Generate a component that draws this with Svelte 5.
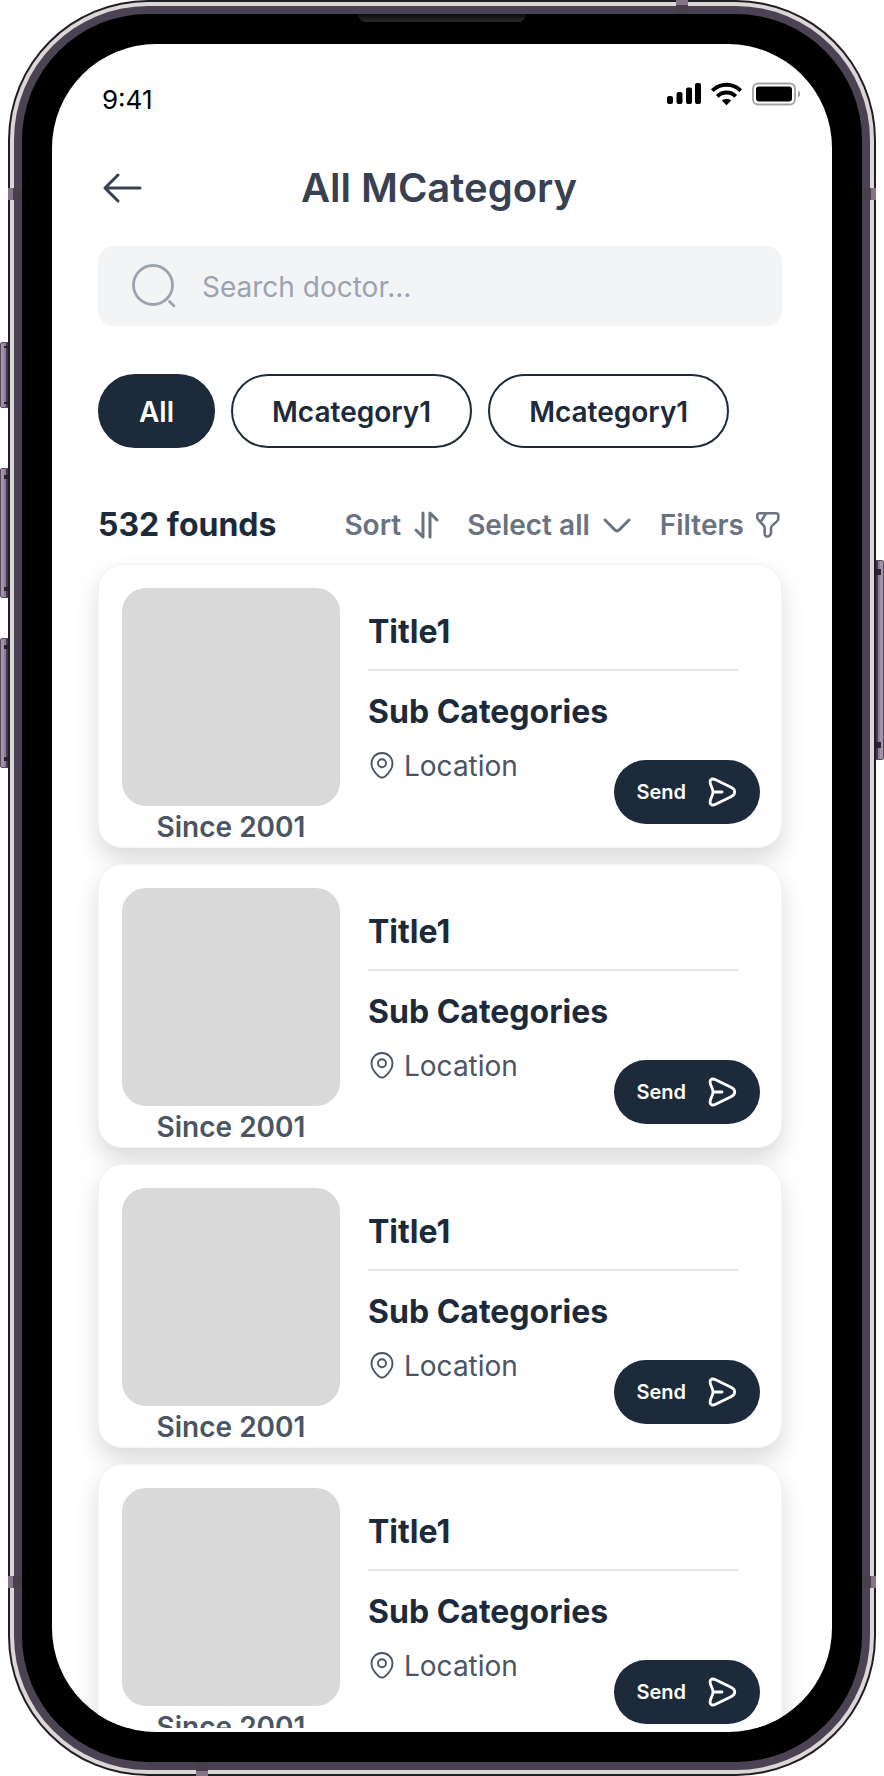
<script>
  const chips = ['All', 'Mcategory1', 'Mcategory1'];
  let active = $state(0);
  let query = $state('');
  const cards = Array.from({ length: 4 }, (_, id) => ({
    id,
    title: 'Title1',
    sub: 'Sub Categories',
    location: 'Location',
    since: 'Since 2001'
  }));
</script>

<div class="device">
  <span class="key silent"></span>
  <span class="key volume-up"></span>
  <span class="key volume-down"></span>
  <span class="key power"></span>

  <div class="shell">
    <div class="rim">
      <div class="band">
        <div class="bezel">
          <main class="screen">
            <div class="status">
              <span class="time">9:41</span>
              <svg width="134" height="28" viewBox="0 0 134 28" aria-hidden="true">
                <rect x="1" y="16" width="6" height="8" rx="2" />
                <rect x="10.500" y="12" width="6" height="12" rx="2" />
                <rect x="20" y="7.500" width="6" height="16.500" rx="2" />
                <rect x="29" y="3" width="6" height="21" rx="2" />
                <g fill="none" stroke="#000" stroke-width="4">
                  <path d="M46.300 10.700a20 20 0 0 1 28.400 0" />
                  <path d="M51.300 16.300a13 13 0 0 1 18.400 0" />
                </g>
                <path d="M55.800 20.500a7.200 7.200 0 0 1 9.400 0l-4.700 4.700z" />
                <rect x="87" y="3.500" width="42" height="21" rx="5" fill="none" stroke="#a3a3a3" stroke-width="1.800" />
                <rect x="90" y="6.500" width="36" height="15" rx="3" />
                <path d="M132 10.500q2.400 1.500 2.400 3.500t-2.400 3.500z" fill="#a3a3a3" />
              </svg>
            </div>

            <header class="head">
              <button class="plain back" aria-label="Back">
                <svg width="40" height="32" viewBox="0 0 40 32" class="line">
                  <path d="M16 3 3 16l13 13M3 16h35" stroke-width="3" />
                </svg>
              </button>
              <h1>All MCategory</h1>
            </header>

            <label class="search">
              <svg width="48" height="48" viewBox="0 0 48 48" class="line">
                <circle cx="23" cy="23" r="19.500" stroke-width="2.800" />
                <path d="m39.500 39.500 4.500 4.500" stroke-width="2.800" />
              </svg>
              <input type="text" placeholder="Search doctor..." aria-label="Search doctor" bind:value={query} />
            </label>

            <nav class="chips">
              {#each chips as chip, i}
                <button class="chip" class:active={active === i} onclick={() => (active = i)}>{chip}</button>
              {/each}
            </nav>

            <div class="tools">
              <strong>532 founds</strong>
              <div class="actions">
                <button class="plain tool">
                  Sort
                  <svg width="28" height="28" viewBox="0 0 28 28" class="line" stroke-width="3">
                    <path d="M11 2v24l-7-7M18 26V2l7 7" />
                  </svg>
                </button>
                <button class="plain tool">
                  Select all
                  <svg width="32" height="28" viewBox="0 0 32 28" class="line" stroke-width="3">
                    <path d="m4 9 9.700 9.700q2.300 2.300 4.600 0L28 9" />
                  </svg>
                </button>
                <button class="plain tool">
                  Filters
                  <svg width="26" height="28" viewBox="0 0 26 28" class="line" stroke-width="2.600">
                    <path d="M4.500 2.300h16.500q2.300 0 2.300 2.300v2.700c0 1.200-.6 2.300-1.400 3.100l-4.600 4.200c-.9.800-1.300 1.700-1.300 2.700v4.800c0 1.200-.8 2.200-1.700 2.700l-.7.400c-1.700.9-3.900-.2-3.900-2.200v-5.800c0-.9-.5-2.100-1.100-2.800l-4.800-5.100C3 8.500 2.300 7.200 2.300 6.300V4.600q0-2.300 2.200-2.300zM11 2.500 5.600 11" />
                  </svg>
                </button>
              </div>
            </div>

            <section class="list">
              {#each cards as card (card.id)}
                <article class="card">
                  <div class="media">
                    <div class="thumb"></div>
                    <span class="since">{card.since}</span>
                  </div>
                  <div class="info">
                    <h2 class="title">{card.title}</h2>
                    <h3>{card.sub}</h3>
                    <div class="foot">
                      <span class="place">
                        <svg width="28" height="28" viewBox="0 0 28 28" class="line" stroke-width="1.900">
                          <path d="M14 1c6.300 0 10.500 4.800 10.500 10.500 0 4.800-3.600 9.600-7.500 12.900q-3 2.400-6 0c-3.900-3.300-7.500-8.100-7.500-12.900C3.500 5.800 7.700 1 14 1z" />
                          <circle cx="14" cy="11.200" r="4" />
                        </svg>
                        {card.location}
                      </span>
                      <button class="send">
                        Send
                        <svg width="32" height="32" viewBox="0 0 32 32" class="line" stroke-width="2.800">
                          <path d="M9.600 3.700 25 11.300c5 2.400 5 7 0 9.400L9.600 28.300c-4.400 2-6.600-.6-5-4.800l1.900-4.700c.7-1.800.7-3.800 0-5.600L4.600 8.500c-1.600-4.200.6-6.800 5-4.800zM8 16h8" />
                        </svg>
                      </button>
                    </div>
                  </div>
                </article>
              {/each}
            </section>
          </main>
        </div>
      </div>
    </div>
    <span class="seam top"></span>
    <span class="seam bottom"></span>
    <span class="seam left upper"></span>
    <span class="seam left lower"></span>
    <span class="seam right upper"></span>
    <span class="seam right lower"></span>
    <span class="speaker"></span>
  </div>
</div>

<style>
  :global(body) {
    background: #fff;
  }
  .device,
  .device * {
    box-sizing: border-box;
  }
  .device {
    position: relative;
    height: 100vh;
    padding: 0 8px;
    font-family: Inter, sans-serif;
    font-size: 28px;
    line-height: 40px;
    color: #1c2a3a;
  }

  /* Hardware */
  .shell {
    position: relative;
    height: 100%;
    padding: 2px;
    border-radius: 140px;
    background: #231c23;
  }
  .rim {
    height: 100%;
    padding: 4px;
    border-radius: 138px;
    background: #dbd7d9;
  }
  .band {
    height: 100%;
    padding: 8px;
    border-radius: 134px;
    background: #4b4354;
  }
  .bezel {
    height: 100%;
    padding: 30px;
    border-radius: 126px;
    background: #000;
  }
  .key {
    position: absolute;
    left: 0;
    width: 9px;
    border: 1px solid #5a4c60;
    border-radius: 2px 0 0 2px;
    background: linear-gradient(to right, #a392a8 3px, #8b7d99 3px 5px, #44394a 5px);
  }
  .key::before,
  .key::after {
    content: '';
    position: absolute;
    left: 3px;
    width: 5px;
    height: 4px;
    background: #2b2230;
  }
  .key::before {
    top: 6px;
  }
  .key::after {
    bottom: 6px;
  }
  .silent {
    top: 342px;
    height: 66px;
  }
  .silent::before,
  .silent::after {
    height: 2px;
  }
  .silent::before {
    top: 3px;
  }
  .silent::after {
    bottom: 3px;
  }
  .volume-up {
    top: 468px;
    height: 130px;
  }
  .volume-down {
    top: 638px;
    height: 130px;
  }
  .power {
    left: auto;
    right: 0;
    top: 560px;
    height: 200px;
    border-radius: 0 2px 2px 0;
    background: linear-gradient(to left, #a392a8 3px, #8b7d99 3px 5px, #44394a 5px);
  }
  .power::before,
  .power::after {
    left: 0;
    height: 6px;
  }
  .power::before {
    top: 8px;
  }
  .power::after {
    bottom: 11px;
  }
  .seam {
    position: absolute;
  }
  .top,
  .bottom {
    width: 12px;
    height: 14px;
  }
  .top {
    top: 0;
    right: 188px;
    background: linear-gradient(to bottom, #857488 5px, #483f4c 5px);
  }
  .bottom {
    bottom: 0;
    left: 188px;
    background: linear-gradient(to top, #857488 5px, #483f4c 5px);
  }
  .left,
  .right {
    width: 14px;
    height: 12px;
  }
  .left {
    left: 0;
    background: linear-gradient(to right, #857488 5px, #483f4c 5px);
  }
  .right {
    right: 0;
    background: linear-gradient(to left, #857488 5px, #483f4c 5px);
  }
  .upper {
    top: 188px;
  }
  .lower {
    bottom: 188px;
  }
  .speaker {
    position: absolute;
    top: 14px;
    left: 50%;
    width: 168px;
    height: 8px;
    margin-left: -84px;
    border-radius: 0 0 8px 8px;
    background: linear-gradient(#0c0c0c, #2b2a29);
  }

  /* Screen */
  .screen {
    display: flex;
    flex-direction: column;
    height: 100%;
    padding: 36px 0 4px;
    overflow: hidden;
    border-radius: 104px;
    background: #fff;
  }
  .line {
    flex: none;
    fill: none;
    stroke: currentColor;
    stroke-linecap: round;
    stroke-linejoin: round;
  }
  button {
    font: inherit;
    cursor: pointer;
  }
  .plain {
    display: flex;
    align-items: center;
    padding: 0;
    border: 0;
    background: none;
    color: inherit;
  }
  .status {
    display: flex;
    justify-content: space-between;
    align-items: flex-start;
    padding: 0 32px 0 50px;
    color: #000;
  }
  .time {
    font-size: 26px;
  }
  .head {
    display: grid;
    grid-template-columns: 1fr auto 1fr;
    align-items: center;
    margin: 44px 52px 34px 46px;
    color: #374151;
  }
  .back {
    padding-left: 4px;
  }
  h1,
  h2,
  h3 {
    margin: 0;
  }
  h1 {
    font-size: 40px;
    line-height: 48px;
    font-weight: 600;
  }
  .search {
    display: flex;
    align-items: center;
    gap: 24px;
    margin: 0 50px 48px 46px;
    padding: 16px 32px;
    border-radius: 16px;
    background: #f3f4f6;
    color: #9ca3af;
  }
  .search input {
    flex: 1;
    min-width: 0;
    padding: 2px 0 0;
    border: 0;
    outline: 0;
    background: none;
    font: inherit;
    color: #374151;
  }
  .search input::placeholder {
    color: #9ca3af;
    opacity: 1;
  }
  .chips {
    display: flex;
    gap: 16px;
    margin: 0 50px 52px 46px;
  }
  .chip {
    padding: 16px 39px 14px;
    border: 2px solid #1c2a3a;
    border-radius: 37px;
    background: #fff;
    color: #1c2a3a;
    font-weight: 600;
  }
  .chip.active {
    background: #1c2a3a;
    color: #fff;
  }
  .tools {
    display: flex;
    justify-content: space-between;
    align-items: center;
    margin: 0 51px 0 46px;
    line-height: 50px;
  }
  .tools strong {
    font-size: 32px;
    font-weight: 700;
  }
  .actions {
    display: flex;
    gap: 27px;
    color: #6b7280;
  }
  .tool {
    gap: 11px;
    font-weight: 600;
  }
  .list {
    flex: 1;
    display: flex;
    flex-direction: column;
    gap: 16px;
    min-height: 0;
    padding: 14px 50px 0 46px;
    overflow: hidden;
  }
  .card {
    flex: none;
    display: flex;
    gap: 28px;
    padding: 23px 21px 0 23px;
    border: 1px solid #f3f3f3;
    border-radius: 24px;
    background: #fff;
    box-shadow: 0 12px 24px rgba(0, 0, 0, 0.15);
  }
  .media {
    flex: none;
    text-align: center;
  }
  .thumb {
    width: 218px;
    height: 218px;
    border-radius: 24px;
    background: #d9d9d9;
  }
  .since {
    display: block;
    padding-top: 2px;
    line-height: 39px;
    font-weight: 600;
    color: #4b5563;
  }
  .info {
    flex: 1;
    display: flex;
    flex-direction: column;
    padding: 24px 0 23px;
  }
  h2,
  h3 {
    font-size: 32px;
    font-weight: 700;
  }
  .title {
    margin: 0 22px 21px 0;
    padding-bottom: 17px;
    border-bottom: 2px solid #e5e7eb;
  }
  .foot {
    flex: 1;
    display: flex;
    justify-content: space-between;
    padding-top: 14px;
  }
  .place {
    display: flex;
    align-items: center;
    align-self: flex-start;
    gap: 8px;
    color: #4b5563;
  }
  .send {
    align-self: flex-end;
    display: flex;
    align-items: center;
    gap: 20px;
    padding: 12px 22px;
    border: 0;
    border-radius: 32px;
    background: #1c2a3a;
    color: #fff;
    font-size: 20px;
    font-weight: 600;
  }
</style>
